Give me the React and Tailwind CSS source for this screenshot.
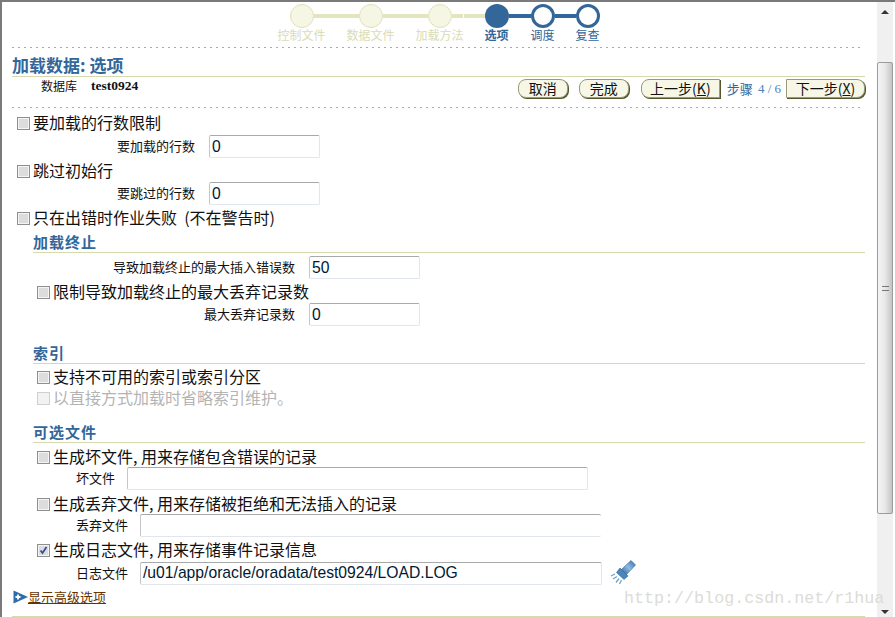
import React from 'react';

const CJK = "font-['Noto_Sans_CJK_SC','Liberation_Sans',sans-serif]";

const steps = [
  { label: '控制文件', box: 'w-[69px]', done: true },
  { label: '数据文件', box: 'w-[69px]', done: true },
  { label: '加载方法', box: 'w-[69px]', done: true },
  { label: '选项', box: 'w-[45px]', current: true },
  { label: '调度', box: 'w-[47px]' },
  { label: '复查', box: 'w-[43px]' },
];

function Stepper() {
  return (
    <div className="h-[45px] pt-[2px]">
      <div className="flex items-center ml-[278px] h-[24px]">
        <span className="w-[24px] h-[24px] rounded-full bg-[#f5f6e4] border border-[#dfe2b8]" />
        <span className="w-[45px] h-[4px] bg-[#e3e6bd]" />
        <span className="w-[24px] h-[24px] rounded-full bg-[#f5f6e4] border border-[#dfe2b8]" />
        <span className="w-[45px] h-[4px] bg-[#e3e6bd]" />
        <span className="w-[24px] h-[24px] rounded-full bg-[#f5f6e4] border border-[#dfe2b8]" />
        <span className="w-[11px] h-[4px] bg-[#e3e6bd]" />
        <span className="w-[1px] h-[4px] bg-white" />
        <span className="w-[21px] h-[4px] bg-[#e3e6bd]" />
        <span className="w-[24px] h-[24px] rounded-full bg-[#336699]" />
        <span className="w-[22px] h-[4px] bg-[#336699]" />
        <span className="w-[24px] h-[24px] rounded-full bg-white border-[3px] border-[#336699]" />
        <span className="w-[21px] h-[4px] bg-[#336699]" />
        <span className="w-[24px] h-[24px] rounded-full bg-white border-[3px] border-[#336699]" />
      </div>
      <div className="flex ml-[255px] h-[14px] items-center text-[12px] leading-none">
        {steps.map((s) => (
          <span
            key={s.label}
            className={`${s.box} text-center whitespace-nowrap ${
              s.done ? 'text-[#d9dcb4]' : s.current ? 'text-[#336699] font-bold' : 'text-[#336699]'
            }`}
          >
            {s.label}
          </span>
        ))}
      </div>
    </div>
  );
}

function Dots() {
  return (
    <div className="h-px mr-[3px] bg-[linear-gradient(to_right,#8fb0d4_2px,transparent_2px)] bg-[length:6px_1px]" />
  );
}

function Check({ checked, disabled }) {
  return (
    <span
      className={`flex items-center justify-center shrink-0 w-[13px] h-[13px] border ${
        disabled ? 'border-[#d0d0d0] bg-[#f2f2f2]' : 'border-[#8e8f8f] bg-[#dcdcdc] shadow-[inset_0_0_0_1px_#f4f4f4]'
      }`}
    >
      {checked && (
        <svg width="9" height="9" viewBox="0 0 9 9">
          <path d="M1.5 4.5 L3.5 7 L7.5 1" fill="none" stroke="#3a4f9c" strokeWidth="1.8" />
        </svg>
      )}
    </span>
  );
}

function CheckRow({ label, checked, disabled, className }) {
  return (
    <div className={`flex items-center h-[20px] text-[16px] leading-none whitespace-nowrap ${className} ${disabled ? 'text-[#b4b4b4]' : 'text-[#111]'}`}>
      <Check checked={checked} disabled={disabled} />
      <span className="ml-[3px] pb-[2px]">{label}</span>
    </div>
  );
}

function Field({ value, className }) {
  return (
    <div className={`h-[23px] flex items-center pl-[2px] rounded-[2px] border-t border-l border-t-[#a9a9a9] border-l-[#c4c6cc] border-r border-b border-r-[#e1e5ee] border-b-[#e1e5ee] font-['Liberation_Sans',sans-serif] text-[15.7px] text-[#001a33] ${className}`}>
      {value}
    </div>
  );
}

function FieldRow({ label, value, labelClass, fieldClass, className }) {
  return (
    <div className={`flex items-center ${className}`}>
      <span className={`text-[13px] leading-none pb-[2px] text-[#111] whitespace-nowrap ${labelClass}`}>{label}</span>
      <Field value={value} className={fieldClass} />
    </div>
  );
}

function Heading({ children, className }) {
  return (
    <div className={`ml-[21px] h-[21px] flex items-center pb-[2px] border-b border-[#d6d9ad] text-[15px] leading-none font-bold tracking-[1px] text-[#336699] ${className}`}>
      {children}
    </div>
  );
}

function Btn({ children, className }) {
  return (
    <span className={`flex items-center justify-center h-[19px] pb-[2px] bg-[#f7f7e7] border border-[#9a9a78] shadow-[1px_1px_0_#55552f] text-[14px] leading-none text-[#111] whitespace-nowrap ${className}`}>
      {children}
    </span>
  );
}

function Flashlight() {
  return (
    <svg width="26" height="26" viewBox="0 0 26 26" className="ml-[8px] shrink-0">
      <defs>
        <linearGradient id="torch" x1="0" y1="1" x2="1" y2="0">
          <stop offset="0" stopColor="#2a5f96" />
          <stop offset="0.5" stopColor="#8dbce4" />
          <stop offset="1" stopColor="#2f6aa3" />
        </linearGradient>
      </defs>
      <path d="M21 0.5 L25.5 5 L16.5 14.5 L11.5 9.5 Z" fill="url(#torch)" stroke="#2d5f93" strokeWidth="0.6" />
      <path d="M10 8 L18 16 L14 19.5 L6.5 12.5 Z" fill="#4b85bc" stroke="#2d5f93" strokeWidth="0.6" />
      <path d="M1 16 L5 14 M3 19 L7 16.5 M6 22.5 L9 18.5 M9.5 24 L11.5 20" stroke="#6fa3d2" strokeWidth="1.3" fill="none" />
    </svg>
  );
}

function Scrollbar() {
  return (
    <div className="w-[16px] h-[615px] shrink-0 flex flex-col items-center bg-[#f0f0f0]">
      <div className="h-[60px] w-full flex justify-center pt-[8px]">
        <span className="w-0 h-0 border-x-[4px] border-x-transparent border-b-[4px] border-b-[#333]" />
      </div>
      <div className="w-full h-[452px] rounded-[2px] border border-[#9c9c9c] bg-[linear-gradient(to_right,#f4f4f4,#e8e8e8_50%,#c4c4c8)] flex items-center justify-center">
        <span className="w-[7px] h-[5px] border-y border-[#777]" />
      </div>
      <div className="flex-1 w-full flex justify-center items-end pb-[3px]">
        <span className="w-0 h-0 border-x-[4px] border-x-transparent border-t-[4px] border-t-[#333]" />
      </div>
    </div>
  );
}

export default function App() {
  return (
    <div className={`relative w-[895px] h-[617px] overflow-hidden bg-white border-t-2 border-l-2 border-[#7a7a7a] flex ${CJK}`}>
      <div className="w-[875px] shrink-0 pl-[10px] pr-[12px]">
        <Stepper />
        <Dots />

        <div className="h-[29px] flex items-end pb-[3px] text-[17px] leading-none font-bold text-[#336699] border-b border-[#d6d9ad]">
          加载数据: 选项
        </div>

        <div className="h-[30px] flex pt-[2px]">
          <div className="flex items-center h-[14px] ml-[29px] whitespace-nowrap">
            <span className="text-[12px] leading-none text-[#111]">数据库</span>
            <span className="ml-[14px] font-['Liberation_Serif',serif] text-[13.5px] font-bold text-[#111]">test0924</span>
          </div>
          <div className="flex items-center ml-auto h-[19px]">
            <Btn className="w-[50px] rounded-[8px]">取消</Btn>
            <Btn className="w-[50px] rounded-[8px] ml-[11px]">完成</Btn>
            <Btn className="w-[79px] rounded-l-[8px] ml-[12px]">上一步(<span className="underline">K</span>)</Btn>
            <span className="ml-[7px] text-[13px] leading-none text-[#336699]">步骤</span>
            <span className="ml-[5px] font-['Liberation_Serif',serif] text-[13px] text-[#4f82b8]">4 / 6</span>
            <Btn className="w-[79px] rounded-r-[8px] ml-[5px]">下一步(<span className="underline">X</span>)</Btn>
          </div>
        </div>
        <Dots />

        <CheckRow className="ml-[5px] mt-[5px]" label="要加载的行数限制" />
        <FieldRow className="mt-[2px]" label="要加载的行数" value="0" labelClass="w-[183px] mr-[14px] text-right" fieldClass="w-[111px]" />
        <CheckRow className="ml-[5px] mt-[3px]" label="跳过初始行" />
        <FieldRow className="mt-[1px]" label="要跳过的行数" value="0" labelClass="w-[183px] mr-[14px] text-right" fieldClass="w-[111px]" />
        <CheckRow className="ml-[5px] mt-[3px]" label={'只在出错时作业失败\u00a0 (不在警告时)'} />

        <Heading className="mt-[4px]">加载终止</Heading>
        <FieldRow className="mt-[3px]" label="导致加载终止的最大插入错误数" value="50" labelClass="w-[283px] mr-[14px] text-right" fieldClass="w-[111px]" />
        <CheckRow className="ml-[25px] mt-[3px]" label="限制导致加载终止的最大丢弃记录数" />
        <FieldRow className="mt-[1px]" label="最大丢弃记录数" value="0" labelClass="w-[283px] mr-[14px] text-right" fieldClass="w-[111px]" />

        <Heading className="mt-[17px]">索引</Heading>
        <CheckRow className="ml-[25px] mt-[3px]" label="支持不可用的索引或索引分区" />
        <CheckRow className="ml-[25px] mt-[1px]" label="以直接方式加载时省略索引维护。" disabled />

        <Heading className="mt-[14px]">可选文件</Heading>
        <CheckRow className="ml-[25px] mt-[4px]" label="生成坏文件, 用来存储包含错误的记录" />
        <FieldRow label="坏文件" labelClass="ml-[64px] w-[51px]" fieldClass="w-[461px]" />
        <CheckRow className="ml-[25px] mt-[4px]" label="生成丢弃文件, 用来存储被拒绝和无法插入的记录" />
        <FieldRow label="丢弃文件" labelClass="ml-[64px] w-[64px]" fieldClass="w-[461px] !border-r-0" />
        <CheckRow className="ml-[25px] mt-[3px]" label="生成日志文件, 用来存储事件记录信息" checked />
        <div className="flex items-center">
          <FieldRow label="日志文件" value="/u01/app/oracle/oradata/test0924/LOAD.LOG" labelClass="ml-[64px] w-[64px]" fieldClass="w-[462px]" />
          <Flashlight />
        </div>

        <div className="flex items-center h-[20px] mt-[1px]">
          <svg width="15" height="14" viewBox="0 0 15 14" className="ml-[1px] shrink-0">
            <path d="M0.5 0.5 L15 7 L0.5 13.5 Z" fill="#2f6ba8" />
            <path d="M2.5 7 H7.5 M5 4.5 V9.5" stroke="#ffffff" strokeWidth="1.8" />
          </svg>
          <span className="pb-[2px] text-[13px] leading-none text-[#663300] underline">显示高级选项</span>
        </div>
        <div className="mt-[9px] h-px bg-[#d6d9ad]" />
      </div>

      <Scrollbar />

      <span className="absolute left-[622px] top-[589px] font-['Liberation_Mono',monospace] text-[16.7px] leading-none text-[#dcdcd6] whitespace-nowrap">
        http://blog.csdn.net/r1hua
      </span>
    </div>
  );
}
